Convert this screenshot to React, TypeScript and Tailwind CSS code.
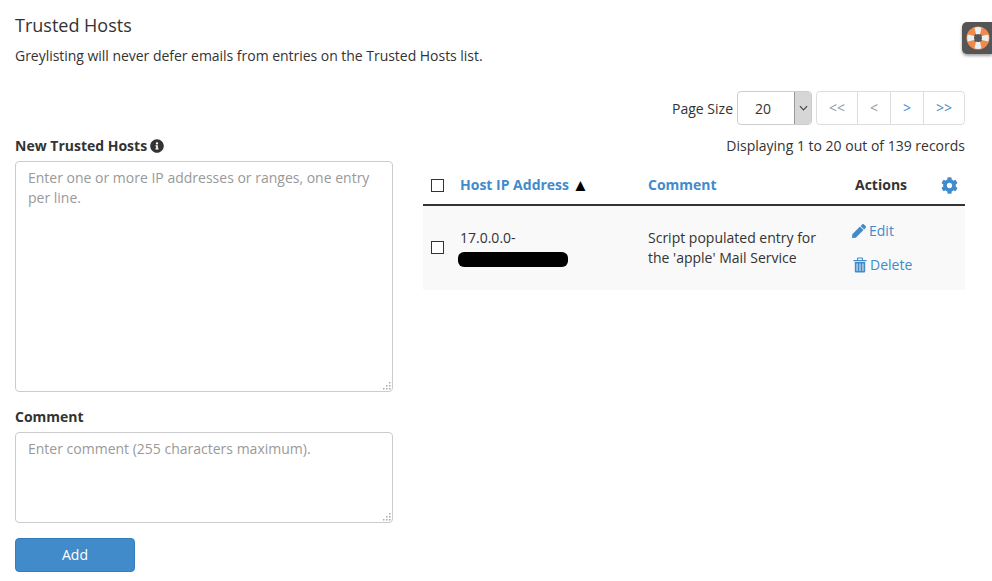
import { FaCog, FaInfoCircle, FaPen } from "react-icons/fa";

function Box() {
  return <span className="block w-[13px] h-[13px] border border-[#333] bg-white" />;
}

function Grip() {
  return (
    <svg viewBox="0 0 9 9" className="absolute right-[2px] bottom-[2px] w-[9px] h-[9px]" fill="#aaa">
      <rect x="7" y="1" width="1.5" height="1.5" />
      <rect x="4" y="4" width="1.5" height="1.5" />
      <rect x="7" y="4" width="1.5" height="1.5" />
      <rect x="1" y="7" width="1.5" height="1.5" />
      <rect x="4" y="7" width="1.5" height="1.5" />
      <rect x="7" y="7" width="1.5" height="1.5" />
    </svg>
  );
}

function Trash() {
  return (
    <svg viewBox="0 0 14 16" className="w-[14px] h-[16px]" fill="currentColor">
      <path d="M5 0.5h4a1 1 0 0 1 1 1V3h3.5v1.2H.5V3H4V1.500a1 1 0 0 1 1-1zM5.100 3h3.800V1.600H5.100z" fillRule="evenodd" />
      <path d="M1.800 5h10.400v9.500a1 1 0 0 1-1 1H2.800a1 1 0 0 1-1-1zM3.600 6.500v7.500h.9V6.500zM6.550 6.500v7.500h.9V6.500zM9.500 6.500v7.500h.9V6.500z" fillRule="evenodd" />
    </svg>
  );
}

function Lifebuoy() {
  return (
    <div className="absolute right-0 top-[22px] w-[30px] h-[32px] bg-[#555] rounded-l-[5px] flex items-center justify-center shadow-[0_2px_3px_rgba(0,0,0,0.35)]">
      <svg viewBox="0 0 24 24" className="w-[24px] h-[24px] ml-[2px] -mt-[1px]">
        <circle cx="12" cy="12" r="8" fill="none" stroke="#f08a4b" strokeWidth="7" />
        <path d="M8.500 1.700 A11 11 0 0 1 15.500 1.700 L14 8.500 A4 4 0 0 0 10 8.500Z" fill="#e8f0f6" />
        <path d="M8.500 22.300 A11 11 0 0 0 15.500 22.300 L14 15.500 A4 4 0 0 1 10 15.500Z" fill="#e8f0f6" />
        <path d="M1.700 8.500 A11 11 0 0 0 1.700 15.500 L8.500 14 A4 4 0 0 1 8.500 10Z" fill="#e8f0f6" />
        <path d="M22.300 8.500 A11 11 0 0 1 22.300 15.500 L15.500 14 A4 4 0 0 0 15.500 10Z" fill="#e8f0f6" />
      </svg>
    </div>
  );
}

export default function App() {
  const font = { fontFamily: '"Open Sans", sans-serif' };
  return (
    <div style={font} className="relative w-[992px] h-[581px] overflow-hidden bg-white text-[14px] leading-[20px] text-[#333] pl-[15px] pr-[27px]">
      <Lifebuoy />
      <h1 className="text-[18px] leading-[20px] pt-[15px] font-normal">Trusted Hosts</h1>
      <p className="mt-[11px] tracking-[-0.03px]">Greylisting will never defer emails from entries on the Trusted Hosts list.</p>

      <div className="flex gap-[30px] mt-[25px]">
        <div className="w-[378px] pt-[45px]">
          <label className="flex items-center font-bold h-[20px]">
            New Trusted Hosts
            <FaInfoCircle className="ml-[3px] w-[14px] h-[14px] text-[#333]" />
          </label>
          <div className="relative mt-[5px]">
            <textarea
              className="block w-full h-[231px] resize-none border border-[#ccc] rounded-[4px] px-[12px] py-[6px] placeholder:text-[#999] outline-none"
              placeholder="Enter one or more IP addresses or ranges, one entry per line."
            />
            <Grip />
          </div>
          <label className="block font-bold mt-[15px] h-[20px]">Comment</label>
          <div className="relative mt-[5px]">
            <textarea
              className="block w-full h-[91px] resize-none border border-[#ccc] rounded-[4px] px-[12px] py-[6px] placeholder:text-[#999] outline-none"
              placeholder="Enter comment (255 characters maximum)."
            />
            <Grip />
          </div>
          <button className="block mt-[15px] w-[120px] h-[34px] bg-[#428bca] border border-[#357ebd] rounded-[4px] text-white text-center">
            Add
          </button>
        </div>

        <div className="w-[542px]">
          <div className="flex justify-end items-center h-[34px]">
            <span className="mr-[4px] mt-[2px]">Page Size</span>
            <div className="flex w-[75px] h-[34px] border border-[#ccc] rounded-[4px] overflow-hidden">
              <span className="flex-1 pl-[17px] leading-[34px]">20</span>
              <span className="w-[17px] bg-[#d6d6d6] border-l border-[#999] flex items-center justify-center">
                <svg viewBox="0 0 10 6" className="w-[9px] h-[6px]" fill="none" stroke="#444" strokeWidth="1.3">
                  <path d="M1 1l4 4 4-4" />
                </svg>
              </span>
            </div>
            <div className="flex ml-[4px] h-[34px] border border-[#ddd] rounded-[4px] text-[14px]">
              <span className="w-[40px] flex items-center justify-center text-[#999]">&lt;&lt;</span>
              <span className="w-[33px] border-l border-[#ddd] flex items-center justify-center text-[#999]">&lt;</span>
              <span className="w-[33px] border-l border-[#ddd] flex items-center justify-center text-[#428bca]">&gt;</span>
              <span className="w-[41px] border-l border-[#ddd] flex items-center justify-center text-[#428bca]">&gt;&gt;</span>
            </div>
          </div>
          <div className="text-right mt-[11px]">Displaying 1 to 20 out of 139 records</div>

          <div className="flex items-center h-[40px] mt-[10px] border-b-2 border-[#333] font-bold">
            <span className="w-[38px] pl-[8px]"><Box /></span>
            <span className="w-[187px] -ml-[1px] mr-[1px] text-[#428bca] flex items-center">
              Host IP Address
              <span className="ml-[3px] text-black text-[17px] leading-[20px]">▲</span>
            </span>
            <span className="w-[207px] text-[#428bca]">Comment</span>
            <span className="w-[86px]">Actions</span>
            <FaCog className="w-[17px] h-[17px] text-[#428bca]" />
          </div>

          <div className="flex items-center h-[84px] pb-[1px] bg-[#f9f9f9]">
            <span className="w-[38px] pl-[8px]"><Box /></span>
            <div className="w-[187px] -ml-[1px] mr-[1px]">
              <div>17.0.0.0-</div>
              <div className="-ml-[2px] w-[110px] h-[15px] mt-[4px] mb-[1px] bg-black rounded-[6px]" />
            </div>
            <div className="w-[204px] pr-[24px]">Script populated entry for the 'apple' Mail Service</div>
            <div className="flex flex-col gap-[14px] text-[#428bca]">
              <span className="flex items-center gap-[3px]"><FaPen className="w-[14px] h-[14px]" />Edit</span>
              <span className="flex items-center gap-[3px] h-[20px]"><span className="ml-[1px]"><Trash /></span>Delete</span>
            </div>
          </div>
        </div>
      </div>
    </div>
  );
}
